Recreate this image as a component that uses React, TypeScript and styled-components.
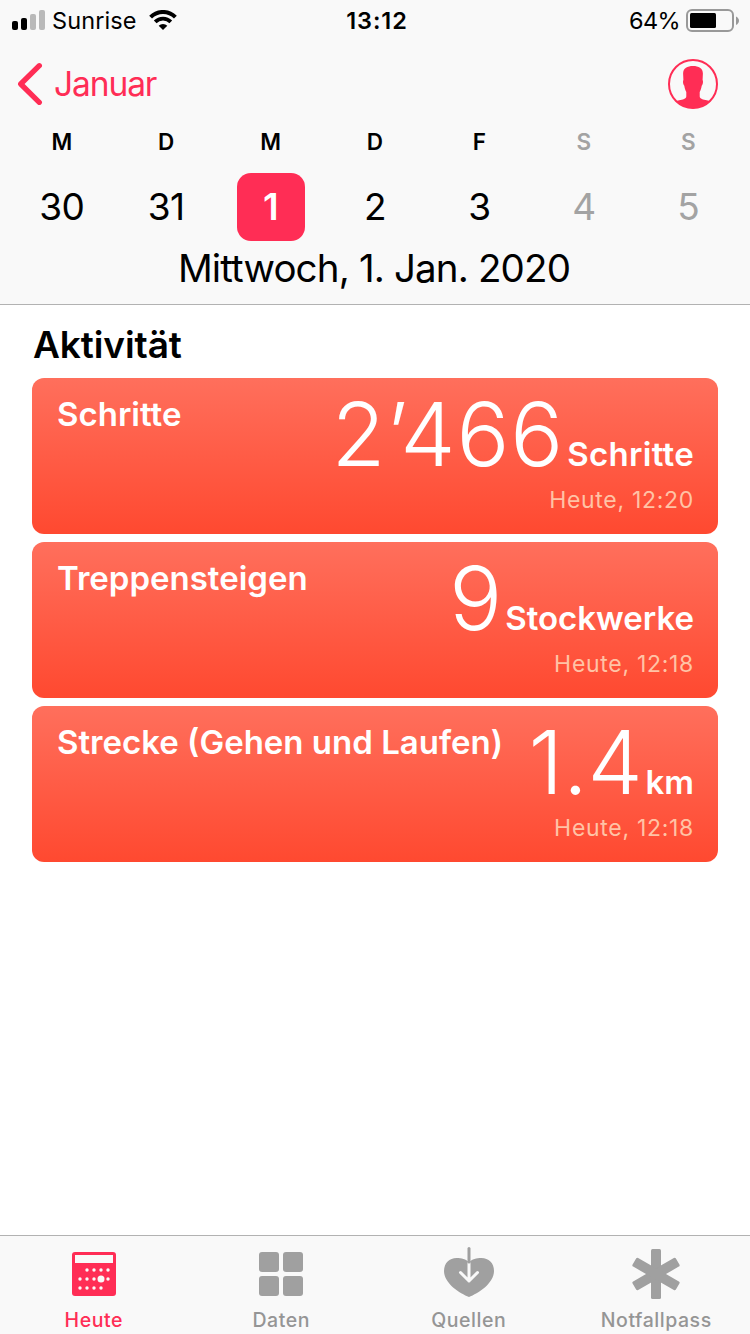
import React from "react";
import styled, { createGlobalStyle } from "styled-components";

const PINK = "#ff2d55";
const GREY = "#a0a0a0";

const GlobalStyle = createGlobalStyle`
  * { box-sizing: border-box; }
  body {
    margin: 0;
    background: #fff;
    color: #000;
    font-family: Inter, "Liberation Sans", sans-serif;
  }
`;

const Screen = styled.div`
  display: flex;
  flex-direction: column;
  width: 750px;
  height: 1334px;
  overflow: hidden;
`;

const Header = styled.header`
  height: 305px;
  background: #f9f9f9;
  border-bottom: 1px solid #b2b2b2;
`;

const StatusBar = styled.div`
  display: grid;
  grid-template-columns: 1fr auto 1fr;
  align-items: center;
  height: 40px;
  padding: 0 11px 0 12px;
  font-size: 23.5px;
  line-height: 38px;
`;

const StatusGroup = styled.div<{ $end?: boolean }>`
  display: flex;
  align-items: center;
  justify-content: ${(p) => (p.$end ? "flex-end" : "flex-start")};
`;

const StatusText = styled.span`
  padding-top: 2px;
`;

const Carrier = styled(StatusText)`
  margin: 0 12px 0 7px;
  letter-spacing: 0.1px;
`;

const Clock = styled(StatusText)`
  padding-left: 3px;
  font-weight: 600;
  letter-spacing: 0.9px;
`;

const Percent = styled(StatusText)`
  margin-right: 6px;
  letter-spacing: -0.6px;
`;

const NavBar = styled.nav`
  display: flex;
  align-items: center;
  justify-content: space-between;
  height: 88px;
  padding: 0 32px 0 17px;
`;

const BackButton = styled.button`
  display: flex;
  align-items: center;
  gap: 11px;
  padding: 0;
  border: 0;
  background: none;
  color: ${PINK};
  font: 400 33.5px/44px Inter, sans-serif;
  letter-spacing: -1.1px;
`;

const Week = styled.div`
  display: grid;
  grid-template-columns: repeat(7, 1fr);
  padding: 0 9.6px;
`;

const Day = styled.div<{ $muted?: boolean }>`
  display: flex;
  flex-direction: column;
  align-items: center;
  color: ${(p) => (p.$muted ? "#a3a3a3" : "#000")};
`;

const Weekday = styled.span`
  height: 45px;
  font-size: 22.5px;
  font-weight: 600;
  line-height: 28px;
`;

const DayNumber = styled.span<{ $selected?: boolean }>`
  width: 68px;
  height: 68px;
  border-radius: 14px;
  background: ${(p) => (p.$selected ? PINK : "transparent")};
  color: ${(p) => (p.$selected ? "#fff" : "inherit")};
  font-size: 37px;
  font-weight: ${(p) => (p.$selected ? 600 : 400)};
  line-height: 68px;
  letter-spacing: -0.6px;
  text-align: center;
`;

const DateTitle = styled.h1`
  margin: 0;
  padding-right: 2px;
  font-size: 38.5px;
  font-weight: 400;
  line-height: 55px;
  letter-spacing: -0.85px;
  text-align: center;
`;

const Main = styled.main`
  flex: 1;
  padding: 0 32px;
`;

const SectionTitle = styled.h2`
  margin: 0;
  padding: 15px 0 8px 1px;
  font-size: 37px;
  font-weight: 600;
  line-height: 50px;
  letter-spacing: -0.1px;
`;

const CardList = styled.div`
  display: flex;
  flex-direction: column;
  gap: 8px;
`;

const Card = styled.section`
  height: 156px;
  padding: 16px 24px 0 25px;
  border-radius: 12px;
  background: linear-gradient(#ff6f5c, #ff4930);
  color: #fff;
`;

const CardTop = styled.div`
  display: flex;
  justify-content: space-between;
  height: 86px;
`;

const CardLabel = styled.h3`
  margin: 0;
  font-size: 33px;
  font-weight: 600;
  line-height: 40px;
  white-space: nowrap;
`;

const Reading = styled.div`
  display: flex;
  align-items: baseline;
  white-space: nowrap;
`;

const Value = styled.span<{ $tracking: number }>`
  font-size: 88px;
  font-weight: 300;
  line-height: 80px;
  letter-spacing: ${(p) => p.$tracking}px;
`;

const Unit = styled.span<{ $tracking: number }>`
  margin-left: 3px;
  font-size: 33px;
  font-weight: 600;
  letter-spacing: ${(p) => p.$tracking}px;
`;

const Timestamp = styled.div`
  color: #ffc3a6;
  font-size: 23px;
  line-height: 40px;
  letter-spacing: 0.7px;
  text-align: right;
`;

const TabBar = styled.footer`
  display: grid;
  grid-template-columns: repeat(4, 1fr);
  height: 99px;
  border-top: 1px solid #b2b2b2;
  background: #f9f9f9;
`;

const Tab = styled.div<{ $active?: boolean }>`
  display: flex;
  flex-direction: column;
  align-items: center;
  padding-top: 10px;
  color: ${(p) => (p.$active ? PINK : "#959595")};
  font-size: 19.5px;
  font-weight: 500;
  line-height: 26px;
  letter-spacing: 0.55px;

  svg {
    flex: none;
    margin-bottom: 9px;
    overflow: visible;
  }
`;

const SignalIcon = () => (
  <svg width="33" height="20" viewBox="0 0 33 20">
    <rect x="0" y="11" width="6" height="9" rx="2" />
    <rect x="9" y="8" width="6" height="12" rx="2" />
    <rect x="18" y="4" width="6" height="16" rx="2" fill="#b9b9b9" />
    <rect x="27" y="0" width="6" height="20" rx="2" fill="#b9b9b9" />
  </svg>
);

const WifiIcon = () => (
  <svg width="28" height="20" viewBox="0 0 28 20" fill="none" stroke="#000">
    <path d="M1.600 7.100A17.500 17.500 0 0 1 26.400 7.100" strokeWidth="4" />
    <path d="M6.200 11.900A11 11 0 0 1 21.800 11.900" strokeWidth="3.800" />
    <path d="M14 20l-4.300-4.300a6 6 0 0 1 8.600 0z" fill="#000" stroke="none" />
  </svg>
);

const BatteryIcon = () => (
  <svg width="53" height="24" viewBox="0 -1 53 24">
    <rect x="1" y="1" width="46" height="21" rx="5" fill="none" stroke="#999" strokeWidth="2" />
    <rect x="4" y="4" width="26" height="15" rx="1.500" />
    <path d="M50 7.500c4 2 4 6.500 0 8.500z" fill="#999" />
  </svg>
);

const ChevronIcon = () => (
  <svg width="26" height="44" viewBox="0 0 26 44" fill="none" stroke={PINK} strokeWidth="5.300" strokeLinecap="round" strokeLinejoin="round">
    <path d="M22.300 3.700L3.700 22l18.600 18.300" />
  </svg>
);

const ProfileIcon = () => (
  <svg width="50" height="50" viewBox="0 0 50 50">
    <circle cx="25" cy="25" r="24" fill="none" stroke={PINK} strokeWidth="2" />
    <path
      fill={PINK}
      d="M25 7c5.500 0 9.900 2.200 9.900 7.500l-.3 6.500c.8 1 .3 4.500-.9 5.800-.4 2.300-.9 4.200-2 6.200v4.200c0 2.800 3.600 3.300 7.100 4 1.400.3 2.500.7 3.300 1.200A24.500 24.500 0 0 1 7.900 42.400c.8-.5 1.900-.9 3.300-1.200 3.500-.7 7.100-1.200 7.100-4V33c-1.100-2-1.600-3.900-2-6.200-1.200-1.300-1.700-4.800-.9-5.800l-.3-6.500C15.100 9.200 19.500 7 25 7z"
    />
  </svg>
);

const dots: [number, number][] = [
  [17, 20], [24, 20], [31, 20], [38, 20],
  [10, 29], [17, 29], [24, 29], [38, 29],
  [10, 38], [17, 38], [24, 38], [31, 38],
];

const CalendarIcon = () => (
  <svg width="48" height="52" viewBox="0 0 48 52">
    <rect x="2" y="6" width="44" height="44" rx="3" fill={PINK} />
    <rect x="5" y="9" width="38" height="8" fill="#f9f9f9" />
    <g fill="#f9f9f9" transform="translate(0 4)">
      {dots.map(([x, y]) => <circle key={`${x}-${y}`} cx={x} cy={y} r="1.700" />)}
      <circle cx="31" cy="29" r="3.500" />
    </g>
  </svg>
);

const GridIcon = () => (
  <svg width="48" height="52" viewBox="0 0 48 52" fill={GREY}>
    <rect x="2" y="6" width="20" height="20" rx="3" />
    <rect x="26" y="6" width="20" height="20" rx="3" />
    <rect x="2" y="30" width="20" height="20" rx="3" />
    <rect x="26" y="30" width="20" height="20" rx="3" />
  </svg>
);

const SourcesIcon = () => (
  <svg width="50" height="52" viewBox="0 0 50 52" fill="none" strokeLinecap="round" strokeLinejoin="round">
    <path d="M25 51C16 47.500 0 37.500 0 25C0 17 5.500 12 12.500 12c5 0 9.500 1 12.500 4.500 3-3.500 7.500-4.500 12.500-4.500C44.500 12 50 17 50 25 50 37.500 34 47.500 25 51z" fill={GREY} />
    <path d="M25 17v18M16.500 26.500L25 35l8.500-8.500" stroke="#f9f9f9" strokeWidth="3" />
    <path d="M25 2.500V16" stroke={GREY} strokeWidth="3" />
  </svg>
);

const AsteriskIcon = () => (
  <svg width="50" height="52" viewBox="0 0 50 52" fill={GREY}>
    {[0, 60, 120].map((a) => (
      <rect key={a} x="20" y="3" width="10" height="50" rx="1.500" transform={`rotate(${a} 25 28)`} />
    ))}
  </svg>
);

const days = [
  { name: "M", number: 30 },
  { name: "D", number: 31 },
  { name: "M", number: 1, selected: true },
  { name: "D", number: 2 },
  { name: "F", number: 3 },
  { name: "S", number: 4, muted: true },
  { name: "S", number: 5, muted: true },
];

const cards = [
  { label: "Schritte", value: "2’466", valueTracking: 0.9, unit: "Schritte", unitTracking: 0.3, time: "Heute, 12:20" },
  { label: "Treppensteigen", value: "9", valueTracking: 0, unit: "Stockwerke", unitTracking: 0, time: "Heute, 12:18" },
  { label: "Strecke (Gehen und Laufen)", value: "1.4", valueTracking: -0.3, unit: "km", unitTracking: 0, time: "Heute, 12:18" },
];

export default function App() {
  return (
    <Screen>
      <GlobalStyle />
      <Header>
        <StatusBar>
          <StatusGroup>
            <SignalIcon />
            <Carrier>Sunrise</Carrier>
            <WifiIcon />
          </StatusGroup>
          <Clock>13:12</Clock>
          <StatusGroup $end>
            <Percent>64%</Percent>
            <BatteryIcon />
          </StatusGroup>
        </StatusBar>
        <NavBar>
          <BackButton>
            <ChevronIcon />
            Januar
          </BackButton>
          <ProfileIcon />
        </NavBar>
        <Week>
          {days.map((d) => (
            <Day key={d.number} $muted={d.muted}>
              <Weekday>{d.name}</Weekday>
              <DayNumber $selected={d.selected}>{d.number}</DayNumber>
            </Day>
          ))}
        </Week>
        <DateTitle>Mittwoch, 1. Jan. 2020</DateTitle>
      </Header>
      <Main>
        <SectionTitle>Aktivität</SectionTitle>
        <CardList>
          {cards.map((c) => (
            <Card key={c.label}>
              <CardTop>
                <CardLabel>{c.label}</CardLabel>
                <Reading>
                  <Value $tracking={c.valueTracking}>{c.value}</Value>
                  <Unit $tracking={c.unitTracking}>{c.unit}</Unit>
                </Reading>
              </CardTop>
              <Timestamp>{c.time}</Timestamp>
            </Card>
          ))}
        </CardList>
      </Main>
      <TabBar>
        <Tab $active>
          <CalendarIcon />
          Heute
        </Tab>
        <Tab>
          <GridIcon />
          Daten
        </Tab>
        <Tab>
          <SourcesIcon />
          Quellen
        </Tab>
        <Tab>
          <AsteriskIcon />
          Notfallpass
        </Tab>
      </TabBar>
    </Screen>
  );
}
